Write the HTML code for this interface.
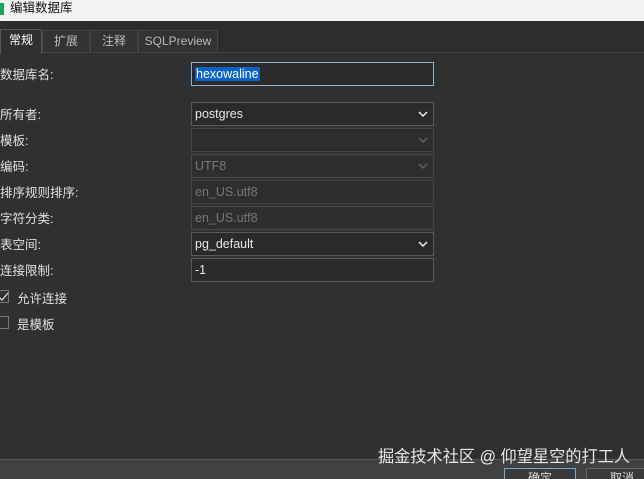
<!DOCTYPE html>
<html style="width:644px;height:479px;overflow:hidden"><head><meta charset="utf-8"><style>
*{margin:0;padding:0;box-sizing:border-box}
body{width:644px;height:479px;overflow:hidden;background:#303030;font-family:"Liberation Sans","Noto Sans CJK SC",sans-serif;font-size:12px;color:#e6e6e6;position:relative}
.title{position:absolute;left:0;top:0;width:644px;height:21px;background:#f3f3f3;color:#111;font-size:12.5px;line-height:16px;padding-left:10px}
.title i{position:absolute;left:0;top:3px;width:4px;height:12px;background:#1aa35a}
.tabbar{position:absolute;left:0;top:21px;width:644px;height:32px;background:#2d2d2d;border-bottom:1px solid #444}
.tab{position:absolute;top:9px;height:22px;line-height:21px;text-align:center;color:#b8b8b8;border:1px solid #444;border-bottom:none;background:#333;font-size:12px}
.tab.a{background:#303030;color:#fff;top:8px;height:25px;border-color:#555}
.lbl{position:absolute;left:0;font-size:12.5px;color:#e0e0e0;margin-top:-2px}
.f{position:absolute;left:191px;width:243px;height:24px;border:1px solid #5a5a5a;background:#2a2a2a;padding-left:3px;line-height:22px;font-size:12.5px;color:#e6e6e6}
.f.d{color:#777;border-color:#464646;background:#2e2e2e}
.f svg{position:absolute;right:5px;top:8px}
.cb{position:absolute;left:-4px;width:13px;height:13px;border:1px solid #777}
.foot{position:absolute;left:0;top:459px;width:644px;height:20px;background:#414141;border-top:1px solid #575757}
.btn{position:absolute;top:468px;height:20px;width:72px;border:1px solid #666;background:#3a3a3a;text-align:center;color:#ddd}
.wm{position:absolute;left:378px;top:443px;font-size:16.2px;color:#e8e8e8;white-space:nowrap}
</style></head><body>
<div class="title"><i></i>编辑数据库</div>
<div class="tabbar">
<div class="tab a" style="left:0;width:42px">常规</div>
<div class="tab" style="left:42px;width:48px">扩展</div>
<div class="tab" style="left:90px;width:48px">注释</div>
<div class="tab" style="left:138px;width:80px">SQLPreview</div>
</div>
<div class="lbl" style="top:66px">数据库名:</div>
<div class="f" style="top:62px;border-color:#8fb4cc"><span style="background:#0a64c8;color:#fff;padding:0 1px">hexowaline</span></div>
<div class="lbl" style="top:106px">所有者:</div>
<div class="f" style="top:102px">postgres<svg width="10" height="7"><path d="M1 1 L5 5 L9 1" stroke="#eee" stroke-width="1.5" fill="none"/></svg></div>
<div class="lbl" style="top:132px">模板:</div>
<div class="f d" style="top:128px"><svg width="10" height="7"><path d="M1 1 L5 5 L9 1" stroke="#666" stroke-width="1.3" fill="none"/></svg></div>
<div class="lbl" style="top:158px">编码:</div>
<div class="f d" style="top:154px">UTF8<svg width="10" height="7"><path d="M1 1 L5 5 L9 1" stroke="#666" stroke-width="1.3" fill="none"/></svg></div>
<div class="lbl" style="top:184px">排序规则排序:</div>
<div class="f d" style="top:180px">en_US.utf8</div>
<div class="lbl" style="top:210px">字符分类:</div>
<div class="f d" style="top:206px">en_US.utf8</div>
<div class="lbl" style="top:236px">表空间:</div>
<div class="f" style="top:232px">pg_default<svg width="10" height="7"><path d="M1 1 L5 5 L9 1" stroke="#eee" stroke-width="1.5" fill="none"/></svg></div>
<div class="lbl" style="top:262px">连接限制:</div>
<div class="f" style="top:258px">-1</div>
<div class="cb" style="top:290px"><svg width="12" height="12" style="position:absolute;left:0;top:0"><path d="M2 6 L5 9 L11 2" stroke="#ddd" stroke-width="1.3" fill="none"/></svg></div>
<div class="lbl" style="left:17px;top:290px">允许连接</div>
<div class="cb" style="top:316px"></div>
<div class="lbl" style="left:17px;top:316px">是模板</div>
<div class="foot"></div>
<div class="btn" style="left:504px;border-color:#7fa8c8">确定</div>
<div class="btn" style="left:586px">取消</div>
<div class="wm">掘金技术社区 @ 仰望星空的打工人</div>
</body></html>
